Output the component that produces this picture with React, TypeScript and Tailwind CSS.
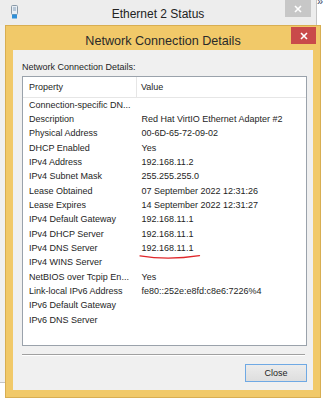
import React from "react";

const rows: [string, string][] = [
  ["Connection-specific DN...", ""],
  ["Description", "Red Hat VirtIO Ethernet Adapter #2"],
  ["Physical Address", "00-6D-65-72-09-02"],
  ["DHCP Enabled", "Yes"],
  ["IPv4 Address", "192.168.11.2"],
  ["IPv4 Subnet Mask", "255.255.255.0"],
  ["Lease Obtained", "07 September 2022 12:31:26"],
  ["Lease Expires", "14 September 2022 12:31:27"],
  ["IPv4 Default Gateway", "192.168.11.1"],
  ["IPv4 DHCP Server", "192.168.11.1"],
  ["IPv4 DNS Server", "192.168.11.1"],
  ["IPv4 WINS Server", ""],
  ["NetBIOS over Tcpip En...", "Yes"],
  ["Link-local IPv6 Address", "fe80::252e:e8fd:c8e6:7226%4"],
  ["IPv6 Default Gateway", ""],
  ["IPv6 DNS Server", ""],
];

function CloseX({ color = "#ffffff" }: { color?: string }) {
  return (
    <svg width="8" height="8" viewBox="0 0 8 8">
      <path d="M1 1L7 7M7 1L1 7" stroke={color} strokeWidth="1.6" />
    </svg>
  );
}

export default function App() {
  return (
    <div
      className="relative w-[323px] h-[400px] overflow-hidden bg-white text-[#1e1e1e]"
      style={{ fontFamily: '"Liberation Sans", Arial, sans-serif' }}
    >
      {/* desktop glyph at top-right */}
      <div className="absolute left-[317px] top-[-5px] text-[11px] leading-[12px] text-[#3a4a6a]">»</div>

      {/* Outer window: Ethernet 2 Status */}
      <div className="absolute left-0 top-0 w-[317px] h-[383px] bg-[#f0f0f0] border-r border-[#c4c4c4] border-b">
        <div className="relative h-[25px] bg-[#ededed] flex items-center justify-center">
          <svg className="absolute left-[11px] top-[5px]" width="7" height="14" viewBox="0 0 7 14">
            <rect x="0.5" y="0.5" width="6" height="9" rx="1" fill="#e8eef4" stroke="#8a9aa8" />
            <rect x="2" y="2" width="3" height="4" fill="#b8c8d8" />
            <rect x="1" y="9.5" width="5" height="4" fill="#2f8fd8" />
          </svg>
          <span className="text-[12px] leading-[14px] text-[#222] mt-[3px]">Ethernet 2 Status</span>
          <div className="absolute left-[285px] top-0 w-[26px] h-[17px] bg-[#c7c7c7] flex items-center justify-center">
            <CloseX />
          </div>
        </div>
      </div>

      {/* Inner dialog: Network Connection Details */}
      <div className="absolute left-[5px] top-[25px] w-[316px] h-[373px] bg-[#f1c969] border border-[#d8ae52] flex flex-col">
        <div className="relative h-[24px] flex items-center justify-center">
          <span className="text-[12.6px] leading-[14px] text-[#2a2a2a] mt-[5px]">Network Connection Details</span>
          <div className="absolute left-[285px] top-[1px] w-[25px] h-[17px] bg-[#c94a4a] flex items-center justify-center">
            <CloseX />
          </div>
        </div>
        <div className="flex-1 mx-[7px] mb-[7px] bg-[#f0f0f0] flex flex-col pl-[9px] pr-[6px] pt-[12px]">
          <div className="text-[9px] leading-[11px]">Network Connection Details:</div>
          <div className="mt-[3px] w-[285px] h-[270px] bg-white border border-[#9aa2ab] flex flex-col">
            <div className="h-[21px] flex border-b border-[#e6e6e6] text-[9px] leading-[11px]">
              <div className="w-[114px] pl-[6px] flex items-center border-r border-[#e6e6e6]">Property</div>
              <div className="flex-1 pl-[4px] flex items-center">Value</div>
            </div>
            <div className="flex flex-col">
              {rows.map(([k, v], i) => (
                <div key={i} className="h-[14.33px] flex items-center text-[9px] leading-[11px] whitespace-nowrap">
                  <div className="w-[112px] pl-[6px]">{k}</div>
                  <div className="pl-[6.5px]">{v}</div>
                </div>
              ))}
            </div>
          </div>
          <div className="mt-[8px] w-[283px] h-[2px] border-t border-[#a0a0a0] border-b border-b-white" />
          <div className="mt-[8px] flex justify-end pr-[0px]">
            <div className="w-[62px] h-[18px] border border-[#6fa9e4] bg-[linear-gradient(#ececec,#dedede)] flex items-center justify-center text-[9px] leading-[11px]">
              Close
            </div>
          </div>
        </div>
      </div>

      {/* red hand-drawn underline annotation */}
      <svg className="absolute left-0 top-0 pointer-events-none" width="323" height="400">
        <path d="M140 255.8 Q 168 260.5 199.5 255.6" fill="none" stroke="#e0262a" strokeWidth="1.3" strokeLinecap="round" />
      </svg>
    </div>
  );
}
